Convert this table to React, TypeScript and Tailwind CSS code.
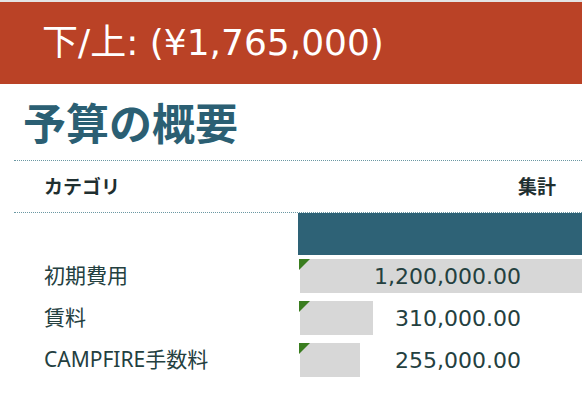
import React from 'react';

// Budget summary rows
interface Row {
  label: string;
  amount: number;
}

const rows: Row[] = [
  { label: '初期費用', amount: 1200000 },
  { label: '賃料', amount: 310000 },
  { label: 'CAMPFIRE手数料', amount: 255000 },
];

const maxAmount = 1200000;
const barMax = 282;

const jp = "font-['Noto_Sans_CJK_JP','Noto_Sans',sans-serif]";
const label = "font-['Noto_Sans','Noto_Sans_CJK_JP',sans-serif]";
const num = "font-['DejaVu_Sans','Noto_Sans_CJK_JP',sans-serif]";

export default function App() {
  return (
    <div className={`w-[582px] h-[402px] overflow-hidden bg-white ${jp}`}>
      <div className="h-[2px] bg-[#e4e4e4]" />
      <div className={`h-[82px] bg-[#ba4226] flex items-center pl-[42px] text-white text-[36px] ${num}`}>
        下/上: (¥1,765,000)
      </div>

      <h1 className="pl-[23px] pt-[9px] h-[76px] text-[43px] leading-[56px] font-bold text-[#2b5f73]">
        予算の概要
      </h1>

      <div className="ml-[14px] h-[53px] border-y border-dotted border-[#6b98a3] flex items-center justify-between pl-[30px] pr-[26px] text-[19px] font-bold text-[#1f2f30]">
        <span>カテゴリ</span>
        <span>集計</span>
      </div>

      <div className="flex">
        <div className="w-[298px]" />
        <div className="flex-1 h-[42px] bg-[#2e6276]" />
      </div>

      {rows.map((row) => (
        <div key={row.label} className="flex h-[42px] items-center">
          <div className={`w-[298px] pl-[44px] text-[21px] text-[#24403f] ${label}`}>{row.label}</div>
          <div className="relative flex-1 h-[34px] pl-[2px]">
            <div
              className="h-full bg-[#d7d7d7]"
              style={{ width: Math.round((row.amount / maxAmount) * barMax) }}
            />
            <div className="absolute left-[1px] top-0 w-0 h-0 border-t-[11px] border-r-[11px] border-t-[#3a7d1f] border-r-transparent" />
            <div className={`absolute right-[61px] top-0 h-full flex items-center text-[22px] text-[#24403f] ${num}`}>
              {row.amount.toLocaleString('en-US', { minimumFractionDigits: 2 })}
            </div>
          </div>
        </div>
      ))}
    </div>
  );
}
